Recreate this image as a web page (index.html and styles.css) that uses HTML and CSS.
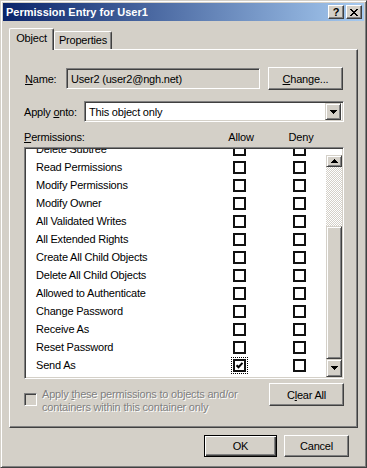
FILE: index.html
```html
<!DOCTYPE html>
<html lang="en">
<head>
    <meta charset="UTF-8">
    <meta name="viewport" content="width=device-width, initial-scale=1.0">
    <title>Permission Entry for User1</title>
    <link rel="stylesheet" href="styles.css">
</head>
<body>
    <div class="window">
        <!-- Title bar -->
        <div class="titlebar">
            <span class="title">Permission Entry for User1</span>
            <div class="caption-buttons">
                <button class="cap-btn help">?</button>
                <button class="cap-btn close">
                    <svg width="8" height="7" viewBox="0 0 8 7"><path d="M0 0h2v1H0zM6 0h2v1H6zM1 1h2v1H1zM5 1h2v1H5zM2 2h4v1H2zM3 3h2v1H3zM2 4h4v1H2zM1 5h2v1H1zM5 5h2v1H5zM0 6h2v1H0zM6 6h2v1H6z"/></svg>
                </button>
            </div>
        </div>

        <div class="client">
            <div class="tabs">
                <div class="tab active">Object</div>
                <div class="tab">Properties</div>
            </div>

            <div class="tab-panel">
                <div class="name-row">
                    <label class="lbl name-lbl"><u>N</u>ame:</label>
                    <div class="readonly-box">User2 (user2@ngh.net)</div>
                    <button class="btn"><u>C</u>hange...</button>
                </div>

                <div class="apply-row">
                    <label class="lbl apply-lbl">Apply <u>o</u>nto:</label>
                    <div class="combo">
                        <span class="combo-text">This object only</span>
                        <span class="combo-btn">
                            <svg width="7" height="4" viewBox="0 0 7 4"><path d="M0 0h7v1H6v1H5v1H4v1H3V3H2V2H1V1H0z"/></svg>
                        </span>
                    </div>
                </div>

                <div class="perm-header">
                    <span><u>P</u>ermissions:</span>
                    <span class="col">Allow</span>
                    <span></span>
                    <span class="col">Deny</span>
                </div>

                <!-- Permission list -->
                <div class="listbox">
                    <div class="rows">
                        <div class="row first"><span>Delete Subtree</span><i class="check"></i><i></i><i class="check"></i></div>
                        <div class="row"><span>Read Permissions</span><i class="check"></i><i></i><i class="check"></i></div>
                        <div class="row"><span>Modify Permissions</span><i class="check"></i><i></i><i class="check"></i></div>
                        <div class="row"><span>Modify Owner</span><i class="check"></i><i></i><i class="check"></i></div>
                        <div class="row"><span>All Validated Writes</span><i class="check"></i><i></i><i class="check"></i></div>
                        <div class="row"><span>All Extended Rights</span><i class="check"></i><i></i><i class="check"></i></div>
                        <div class="row"><span>Create All Child Objects</span><i class="check"></i><i></i><i class="check"></i></div>
                        <div class="row"><span>Delete All Child Objects</span><i class="check"></i><i></i><i class="check"></i></div>
                        <div class="row"><span>Allowed to Authenticate</span><i class="check"></i><i></i><i class="check"></i></div>
                        <div class="row"><span>Change Password</span><i class="check"></i><i></i><i class="check"></i></div>
                        <div class="row"><span>Receive As</span><i class="check"></i><i></i><i class="check"></i></div>
                        <div class="row"><span>Reset Password</span><i class="check"></i><i></i><i class="check"></i></div>
                        <div class="row"><span>Send As</span>
                            <i class="check checked"><svg width="9" height="9" viewBox="0 0 9 9"><path d="M1.5 4.2l2 2 4-4.4" fill="none" stroke="#000" stroke-width="2"/></svg></i>
                            <i></i><i class="check"></i>
                        </div>
                    </div>
                    <div class="scrollbar">
                        <div class="sb-btn sb-up">
                            <svg width="7" height="4" viewBox="0 0 7 4"><path d="M3 0h1v1h1v1h1v1h1v1H0V3h1V2h1V1h1z"/></svg>
                        </div>
                        <div class="sb-track"></div>
                        <div class="sb-thumb"></div>
                        <div class="sb-btn sb-down">
                            <svg width="7" height="4" viewBox="0 0 7 4"><path d="M0 0h7v1H6v1H5v1H4v1H3V3H2V2H1V1H0z"/></svg>
                        </div>
                    </div>
                </div>

                <div class="bottom-row">
                    <div class="inherit">
                        <span class="check-disabled"></span>
                        <span class="inherit-text">Apply <u>t</u>hese permissions to objects and/or<br>containers within this container only</span>
                    </div>
                    <button class="btn">C<u>l</u>ear All</button>
                </div>
            </div>

            <div class="dialog-buttons">
                <button class="btn ok">OK</button>
                <button class="btn cancel">Cancel</button>
            </div>
        </div>
    </div>
</body>
</html>
```

FILE: styles.css
```css
* {
    box-sizing: border-box;
}

body {
    margin: 0;
    background-color: #D4D0C8;
    font-family: "Liberation Sans", Arial, sans-serif;
    font-size: 11px;
    letter-spacing: -0.2px;
    color: #000;
}

.window {
    width: 367px;
    height: 468px;
    border: 1px solid;
    border-color: #D4D0C8 #404040 #404040 #D4D0C8;
    box-shadow: inset 1px 1px #fff, inset -1px -1px #808080;
    padding: 2px;
    display: flex;
    flex-direction: column;
}

/* Title bar */
.titlebar {
    height: 18px;
    display: flex;
    align-items: center;
    padding-left: 3px;
    background: linear-gradient(to right, #0A246A, #A6CAF0);
    color: #fff;
    font-weight: bold;
    letter-spacing: 0;
}

.caption-buttons {
    margin-left: auto;
    display: flex;
    gap: 2px;
    padding-right: 2px;
}

.cap-btn {
    width: 16px;
    height: 14px;
    padding: 0;
    display: flex;
    align-items: center;
    justify-content: center;
    background-color: #D4D0C8;
    border: 1px solid;
    border-color: #fff #404040 #404040 #fff;
    box-shadow: inset -1px -1px #808080;
    font-family: "Liberation Sans", Arial, sans-serif;
    font-weight: bold;
    font-size: 11px;
    color: #000;
}

/* Tabs */
.client {
    flex: 1;
    padding: 7px 6px 0 6px;
    display: flex;
    flex-direction: column;
}

.tabs {
    height: 21px;
    display: flex;
    align-items: flex-end;
}

.tab {
    width: 58px;
    height: 18px;
    display: flex;
    align-items: center;
    justify-content: center;
    border: 1px solid;
    border-bottom: none;
    border-color: #fff #404040 #fff #fff;
    box-shadow: inset -1px 0 #808080;
    border-radius: 2px 2px 0 0;
    padding-bottom: 1px;
}

.tab.active {
    width: 45px;
    height: 22px;
    margin-bottom: -1px;
    position: relative;
    z-index: 1;
    background-color: #D4D0C8;
    padding-bottom: 3px;
}

.tab-panel {
    height: 379px;
    border: 1px solid;
    border-color: #fff #404040 #404040 #fff;
    box-shadow: inset -1px -1px #808080;
    padding: 17px 13px 0 14px;
    display: flex;
    flex-direction: column;
}

.lbl u, .btn u {
    text-decoration-thickness: 1px;
}

/* Name row */
.name-row {
    height: 23px;
    display: flex;
    align-items: center;
}

.name-lbl {
    width: 42px;
    padding-left: 1px;
}

.readonly-box {
    width: 194px;
    height: 21px;
    margin-right: 8px;
    display: flex;
    align-items: center;
    padding-left: 4px;
    border: 1px solid;
    border-color: #808080 #fff #fff #808080;
    box-shadow: inset 1px 1px #404040, inset -1px -1px #D4D0C8;
}

.btn {
    width: 75px;
    height: 23px;
    padding: 0;
    background-color: #D4D0C8;
    border: 1px solid;
    border-color: #fff #404040 #404040 #fff;
    box-shadow: inset -1px -1px #808080;
    font-family: inherit;
    font-size: 11px;
    letter-spacing: -0.2px;
    color: #000;
}

/* Apply onto row */
.apply-row {
    margin-top: 11px;
    height: 21px;
    display: flex;
    align-items: center;
}

.apply-lbl {
    width: 60px;
}

.combo {
    flex: 1;
    height: 21px;
    display: flex;
    align-items: center;
    background-color: #fff;
    border: 1px solid;
    border-color: #808080 #fff #fff #808080;
    box-shadow: inset 1px 1px #404040, inset -1px -1px #D4D0C8;
    padding: 2px;
}

.combo-text {
    flex: 1;
    padding-left: 2px;
}

.combo-btn {
    width: 16px;
    height: 17px;
    display: flex;
    align-items: center;
    justify-content: center;
    background-color: #D4D0C8;
    border: 1px solid;
    border-color: #D4D0C8 #404040 #404040 #D4D0C8;
    box-shadow: inset 1px 1px #fff, inset -1px -1px #808080;
}

/* Permissions header */
.perm-header {
    margin-top: 8px;
    height: 14px;
    display: grid;
    grid-template-columns: 197px 40px 20px 40px 1fr;
    align-items: center;
}

.perm-header .col {
    text-align: center;
}

/* List */
.listbox {
    margin-top: 3px;
    height: 232px;
    display: flex;
    background-color: #fff;
    border: 1px solid;
    border-color: #808080 #fff #fff #808080;
    box-shadow: inset 1px 1px #404040, inset -1px -1px #D4D0C8;
    padding: 1px;
}

.rows {
    flex: 1;
    overflow: hidden;
}

.row {
    height: 18px;
    display: grid;
    grid-template-columns: 197px 13px 47px 13px;
    align-items: center;
    padding-left: 10px;
}

.row.first {
    margin-top: -9px;
}

.check {
    width: 13px;
    height: 13px;
    border: 2px solid #111;
    background-color: #fff;
    display: flex;
    align-items: center;
    justify-content: center;
}

.check.checked {
    outline: 1px dotted #000;
    outline-offset: 1px;
}

.scrollbar {
    width: 16px;
    margin: 6px 0 0 0;
    display: flex;
    flex-direction: column;
}

.sb-btn {
    display: flex;
    align-items: center;
    justify-content: center;
    background-color: #D4D0C8;
    border: 1px solid;
    border-color: #D4D0C8 #404040 #404040 #D4D0C8;
    box-shadow: inset 1px 1px #fff, inset -1px -1px #808080;
}

.sb-up {
    height: 12px;
}

.sb-down {
    height: 18px;
}

.sb-track {
    height: 59px;
    background: repeating-conic-gradient(#fff 0 25%, #D4D0C8 0 50%) 0 0 / 2px 2px;
}

.sb-thumb {
    flex: 1;
    background-color: #D4D0C8;
    border: 1px solid;
    border-color: #D4D0C8 #404040 #404040 #D4D0C8;
    box-shadow: inset 1px 1px #fff, inset -1px -1px #808080;
}

/* Bottom of panel */
.bottom-row {
    margin-top: 4px;
    display: flex;
    justify-content: space-between;
    align-items: flex-start;
}

.inherit {
    margin-top: 5px;
    display: flex;
    gap: 5px;
    color: #808080;
    text-shadow: 1px 1px 0 #fff;
    line-height: 13px;
}

.check-disabled {
    width: 13px;
    height: 13px;
    margin-top: 5px;
    background-color: #D4D0C8;
    border: 1px solid;
    border-color: #808080 #fff #fff #808080;
    box-shadow: inset 1px 1px #404040, inset -1px -1px #D4D0C8;
}

/* OK / Cancel */
.dialog-buttons {
    margin-top: 7px;
    display: flex;
    justify-content: flex-end;
    gap: 7px;
    padding-right: 9px;
}

.btn.ok {
    width: 73px;
    height: 22px;
    border: 1px solid #000;
    box-shadow: inset 1px 1px #fff, inset -1px -1px #404040, inset -2px -2px #808080;
}

.btn.cancel {
    width: 65px;
    height: 22px;
}
```
